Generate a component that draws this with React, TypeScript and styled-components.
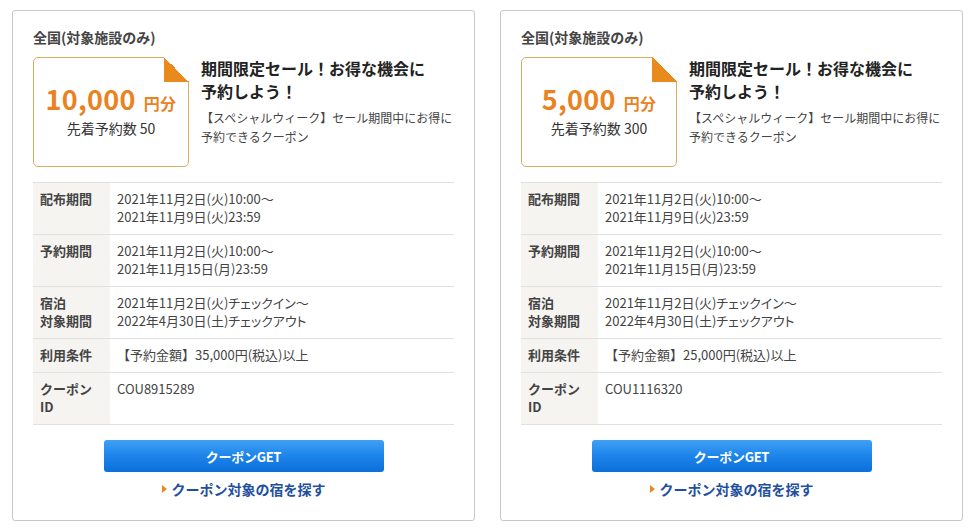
import React from "react";
import styled, { createGlobalStyle } from "styled-components";

const Global = createGlobalStyle`
  html, body { margin: 0; padding: 0; background: #fff; }
  body {
    font-family: "Noto Sans CJK JP", "Noto Sans", sans-serif;
    color: #333;
  }
`;

const Page = styled.div`
  display: flex;
  gap: 25px;
  padding: 10px 0 0 12px;
`;

const Card = styled.div`
  box-sizing: border-box;
  width: 463px;
  height: 511px;
  border: 1px solid #c8c8c8;
  border-radius: 3px;
  padding: 16px 20px 0 20px;
  display: flex;
  flex-direction: column;
`;

const Region = styled.div`
  font-size: 14px;
  font-weight: 700;
  color: #444;
  line-height: 20px;
  height: 20px;
`;

const Top = styled.div`
  display: flex;
  gap: 12px;
  margin-top: 10px;
`;

const CouponBox = styled.div`
  position: relative;
  box-sizing: border-box;
  width: 156px;
  height: 110px;
  border: 1px solid #dcad5e;
  border-radius: 5px;
  display: flex;
  flex-direction: column;
  align-items: center;
  justify-content: center;
  flex-shrink: 0;
`;

const Fold = styled.div`
  position: absolute;
  top: -1px;
  right: -1px;
  width: 25px;
  height: 25px;
  background: linear-gradient(to bottom left, #fff 50%, #e98a1d 50%);
`;

const Amount = styled.div`
  color: #e9821f;
  font-weight: 700;
  font-size: 27px;
  line-height: 30px;
  letter-spacing: 0.3px;
  display: flex;
  align-items: baseline;
  margin-top: -2px;
`;

const Unit = styled.span`
  font-size: 16px;
  margin-left: 8px;
`;

const Limit = styled.div`
  font-size: 14px;
  color: #333;
  line-height: 20px;
`;

const Info = styled.div`
  display: flex;
  flex-direction: column;
`;

const Headline = styled.div`
  font-size: 16px;
  font-weight: 700;
  line-height: 23px;
  color: #222;
`;

const Desc = styled.div`
  font-size: 12px;
  line-height: 19px;
  color: #444;
  margin-top: 5px;
  white-space: nowrap;
`;

const Table = styled.div`
  margin-top: 15px;
  border-top: 1px solid #e0e0e0;
  display: flex;
  flex-direction: column;
`;

const Row = styled.div`
  display: grid;
  grid-template-columns: 77px 1fr;
  border-bottom: 1px solid #e0e0e0;
  font-size: 13px;
  line-height: 18px;
`;

const Label = styled.div`
  background: #f6f4f1;
  padding: 7px 7px 8px 7px;
  color: #444;
  font-weight: 700;
`;

const Value = styled.div`
  padding: 7px 7px 8px 7px;
  color: #444;
`;

const Kana = styled.span`
  font-feature-settings: "palt";
`;

const Actions = styled.div`
  display: flex;
  flex-direction: column;
  align-items: center;
  margin-top: 15px;
`;

const GetButton = styled.button`
  width: 280px;
  height: 32px;
  border: none;
  border-radius: 3px;
  background: linear-gradient(to bottom, #3fa0f5 0%, #1d84ea 50%, #0b6fd8 100%);
  color: #fff;
  font-family: "Noto Sans CJK JP", sans-serif;
  font-weight: 700;
  font-size: 13px;
  letter-spacing: -0.3px;
  cursor: pointer;
`;

const SearchLink = styled.a`
  margin-top: 7px;
  font-size: 14px;
  font-weight: 700;
  color: #1f4f9e;
  text-decoration: none;
  line-height: 20px;
  display: flex;
  align-items: center;
  gap: 5px;
`;

const Arrow = styled.span`
  width: 0;
  height: 0;
  border-top: 4px solid transparent;
  border-bottom: 4px solid transparent;
  border-left: 5px solid #e98a1d;
`;

type Coupon = {
  amount: string;
  limit: string;
  condition: string;
  id: string;
};

const coupons: Coupon[] = [
  { amount: "10,000", limit: "50", condition: "【予約金額】35,000円(税込)以上", id: "COU8915289" },
  { amount: "5,000", limit: "300", condition: "【予約金額】25,000円(税込)以上", id: "COU1116320" },
];

function CouponCard({ c }: { c: Coupon }) {
  return (
    <Card>
      <Region>全国(対象施設のみ)</Region>
      <Top>
        <CouponBox>
          <Fold />
          <Amount>
            {c.amount}
            <Unit>円分</Unit>
          </Amount>
          <Limit>先着予約数 {c.limit}</Limit>
        </CouponBox>
        <Info>
          <Headline>
            期間限定セール！お得な機会に
            <br />
            予約しよう！
          </Headline>
          <Desc>
            【スペシャルウィーク】セール期間中にお得に
            <br />
            予約できるクーポン
          </Desc>
        </Info>
      </Top>
      <Table>
        <Row>
          <Label>配布期間</Label>
          <Value>
            2021年11月2日(火)10:00～
            <br />
            2021年11月9日(火)23:59
          </Value>
        </Row>
        <Row>
          <Label>予約期間</Label>
          <Value>
            2021年11月2日(火)10:00～
            <br />
            2021年11月15日(月)23:59
          </Value>
        </Row>
        <Row>
          <Label>
            宿泊
            <br />
            対象期間
          </Label>
          <Value>
            2021年11月2日(火)<Kana>チェックイン</Kana>～
            <br />
            2022年4月30日(土)<Kana>チェックアウト</Kana>
          </Value>
        </Row>
        <Row>
          <Label>利用条件</Label>
          <Value>{c.condition}</Value>
        </Row>
        <Row>
          <Label>
            クーポン
            <br />
            ID
          </Label>
          <Value>{c.id}</Value>
        </Row>
      </Table>
      <Actions>
        <GetButton>クーポンGET</GetButton>
        <SearchLink href="#">
          <Arrow />
          クーポン対象の宿を探す
        </SearchLink>
      </Actions>
    </Card>
  );
}

export default function App() {
  return (
    <>
      <Global />
      <Page>
        {coupons.map((c) => (
          <CouponCard key={c.id} c={c} />
        ))}
      </Page>
    </>
  );
}
